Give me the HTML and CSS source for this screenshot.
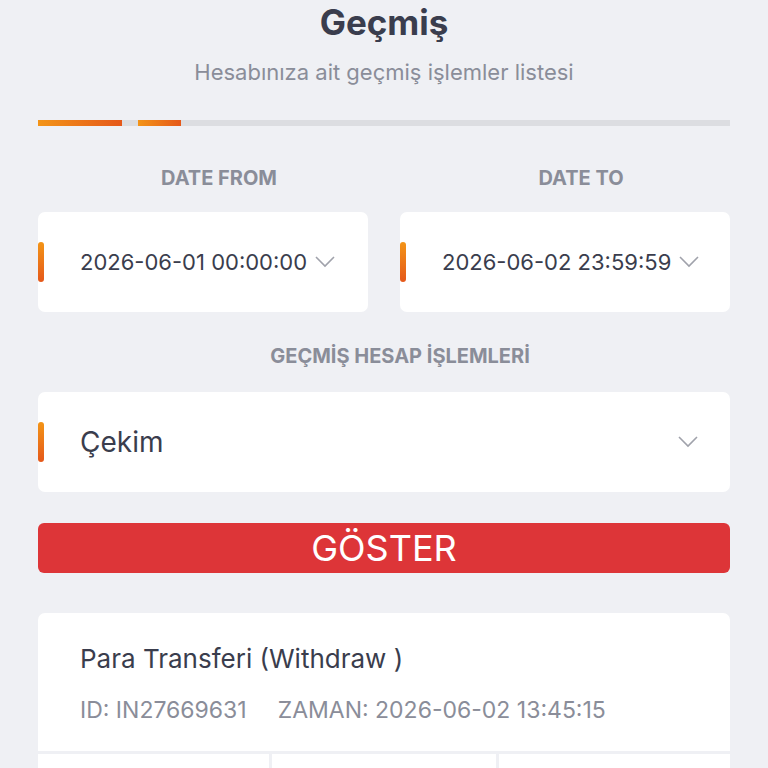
FILE: index.html
```html
<!DOCTYPE html>
<html lang="tr">
<head>
  <meta charset="UTF-8" />
  <meta name="viewport" content="width=device-width, initial-scale=1" />
  <title>Geçmiş</title>
  <link rel="stylesheet" href="styles.css">
</head>
<body>

<main class="page">
  <h1 class="title">Geçmiş</h1>
  <p class="subtitle">Hesabınıza ait geçmiş işlemler listesi</p>

  <div class="progress">
    <span class="seg seg-long"></span>
    <span class="seg seg-short"></span>
  </div>

  <div class="dates">
    <div class="field">
      <div class="label">DATE FROM</div>
      <div class="box">
        <span class="mark"></span>
        <span class="value">2026-06-01 00:00:00</span>
        <svg class="chev" viewBox="0 0 20 12" width="20" height="12"><path d="M1 1 L10 10 L19 1" /></svg>
      </div>
    </div>
    <div class="field">
      <div class="label">DATE TO</div>
      <div class="box">
        <span class="mark"></span>
        <span class="value">2026-06-02 23:59:59</span>
        <svg class="chev" viewBox="0 0 20 12" width="20" height="12"><path d="M1 1 L10 10 L19 1" /></svg>
      </div>
    </div>
  </div>

  <div class="label">GEÇMİŞ HESAP İŞLEMLERİ</div>
  <div class="box select">
    <span class="mark"></span>
    <span class="value big">Çekim</span>
    <svg class="chev" viewBox="0 0 20 12" width="20" height="12"><path d="M1 1 L10 10 L19 1" /></svg>
  </div>

  <button class="show-btn">GÖSTER</button>

  <div class="card">
    <div class="card-title">Para Transferi (Withdraw )</div>
    <div class="card-meta">
      <span>ID: IN27669631</span>
      <span>ZAMAN: 2026-06-02 13:45:15</span>
    </div>
  </div>
  <div class="cells">
    <div class="cell"></div>
    <div class="cell"></div>
    <div class="cell"></div>
  </div>
</main>

</body>
</html>
```

FILE: styles.css
```css
body {
  margin: 0;
  background: #eff0f4;
  font-family: Inter, Roboto, "Liberation Sans", sans-serif;
  color: #3a3d4d;
}
.page {
  padding: 0 38px;
}
.title {
  margin: 0;
  padding-top: 2px;
  text-align: center;
  font-size: 35px;
  font-weight: 700;
  line-height: 40px;
  color: #3a3d4d;
}
.subtitle {
  margin: 20px 0 0;
  text-align: center;
  font-size: 22px;
  line-height: 20px;
  color: #8a8d99;
}
.progress {
  margin-top: 38px;
  height: 6px;
  background: #dcdde1;
  display: flex;
}
.seg {
  height: 6px;
  background: linear-gradient(90deg, #f39417, #e5581a);
}
.seg-long {
  width: 84px;
}
.seg-short {
  width: 43px;
  margin-left: 16px;
}
.dates {
  display: flex;
  gap: 32px;
  margin-top: 42px;
}
.field {
  flex: 1;
}
/* libellés décalés vers la droite comme dans l'app */
.label {
  padding-left: 32px;
  text-align: center;
  font-size: 20px;
  font-weight: 700;
  line-height: 20px;
  color: #8a8d99;
}
.box {
  display: flex;
  align-items: center;
  height: 100px;
  margin-top: 24px;
  background: #fff;
  border-radius: 7px;
}
.mark {
  width: 6px;
  height: 40px;
  border-radius: 3px;
  background: linear-gradient(180deg, #f39417, #e5581a);
}
.value {
  margin-left: 36px;
  font-size: 22px;
  color: #3a3d4d;
}
.chev {
  margin-left: 8px;
  fill: none;
  stroke: #a0a2ab;
  stroke-width: 1.6;
}
.dates + .label {
  margin-top: 34px;
}
.select {
  margin-top: 26px;
}
.select .value {
  flex: 1;
}
.big {
  font-size: 28px;
}
.select .chev {
  margin-right: 32px;
}
.show-btn {
  display: block;
  width: 100%;
  height: 50px;
  margin-top: 31px;
  border: none;
  border-radius: 6px;
  background: #dd3538;
  color: #fff;
  font-family: inherit;
  font-size: 36px;
  line-height: 50px;
  padding: 0;
}
.card {
  margin-top: 40px;
  background: #fff;
  border-radius: 7px 7px 0 0;
  padding: 30px 42px 29px;
}
.card-title {
  font-size: 26px;
  line-height: 32px;
}
.card-meta {
  margin-top: 23px;
  font-size: 23px;
  line-height: 24px;
  color: #8a8d99;
  display: flex;
  gap: 31px;
}
.cells {
  display: flex;
  gap: 3px;
  margin-top: 3px;
}
.cell {
  background: #fff;
  height: 40px;
}
.cell:nth-child(1) { flex: 231; }
.cell:nth-child(2) { flex: 224; }
.cell:nth-child(3) { flex: 231; }
```
